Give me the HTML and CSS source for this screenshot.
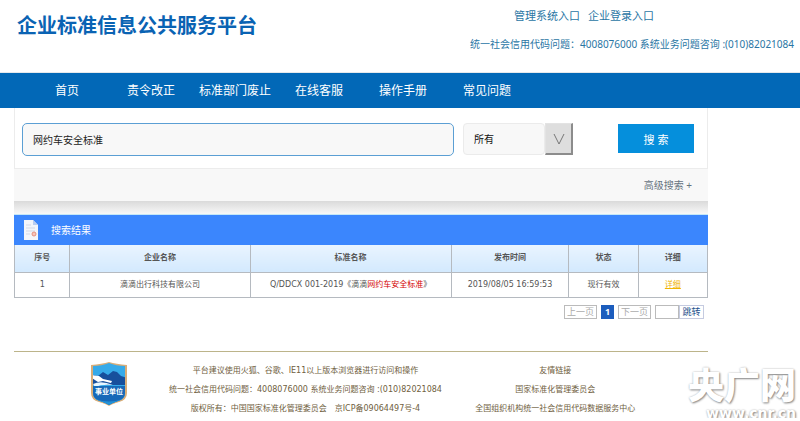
FILE: index.html
```html
<!DOCTYPE html>
<html lang="zh-CN">
<head>
    <meta charset="UTF-8">
    <meta name="viewport" content="width=device-width, initial-scale=1.0">
    <title>企业标准信息公共服务平台</title>
    <link rel="stylesheet" href="styles.css">
</head>
<body>

    <!-- Header -->
    <header class="header">
        <h1>企业标准信息公共服务平台</h1>
        <div class="header-info">
            <div class="entries">
                <a href="#">管理系统入口</a>
                <a href="#">企业登录入口</a>
            </div>
            <p>统一社会信用代码问题：4008076000 系统业务问题咨询 :(010)82021084</p>
        </div>
    </header>

    <nav class="nav">
        <a href="#">首页</a>
        <a href="#">责令改正</a>
        <a href="#">标准部门废止</a>
        <a href="#">在线客服</a>
        <a href="#">操作手册</a>
        <a href="#">常见问题</a>
    </nav>

    <div class="container">
        <!-- Search -->
        <form class="search">
            <input class="keyword" type="text" aria-label="关键词" value="网约车安全标准">
            <div class="status">
                <select id="status" aria-label="状态">
                    <option>所有</option>
                </select>
                <label class="arrow" for="status">
                    <svg width="12" height="12" viewBox="0 0 12 12"><path d="M1 1l5 10 5-10" fill="none" stroke="#777"/></svg>
                </label>
            </div>
            <button class="search-btn" type="button">搜 索</button>
        </form>
        <div class="advanced"><a href="#">高级搜索 +</a></div>
        <div class="shadow"></div>

        <!-- Results -->
        <div class="result-title">
            <svg width="16" height="20" viewBox="0 0 16 20">
                <path d="M1 0h9l5 5v15H1z" fill="#f3f5fa"/>
                <path d="M10 0v5h5z" fill="#b9cdf0"/>
                <path d="M3 5h5M3 8h9M3 11h9M3 14h4" stroke="#d3d9e6"/>
                <circle cx="11" cy="14" r="2" fill="#f6c5bd" stroke="#e5907f"/>
            </svg>
            <h2>搜索结果</h2>
        </div>
        <table class="result">
            <colgroup>
                <col class="col-no"><col class="col-company"><col class="col-name">
                <col class="col-time"><col class="col-status"><col class="col-detail">
            </colgroup>
            <thead>
                <tr>
                    <th>序号</th>
                    <th>企业名称</th>
                    <th>标准名称</th>
                    <th>发布时间</th>
                    <th>状态</th>
                    <th>详细</th>
                </tr>
            </thead>
            <tbody>
                <tr>
                    <td>1</td>
                    <td>滴滴出行科技有限公司</td>
                    <td>Q/DDCX 001-2019《滴滴<em>网约车安全标准</em>》</td>
                    <td>2019/08/05 16:59:53</td>
                    <td>现行有效</td>
                    <td><a href="#">详细</a></td>
                </tr>
            </tbody>
        </table>

        <div class="pager">
            <button type="button" disabled>上一页</button>
            <button class="current" type="button">1</button>
            <button type="button" disabled>下一页</button>
            <div class="jump">
                <input type="text" aria-label="页码">
                <button type="button">跳转</button>
            </div>
        </div>

        <!-- Footer -->
        <footer class="footer">
            <div class="badge">
                <svg width="38" height="46" viewBox="0 0 38 46">
                    <defs>
                        <clipPath id="shield"><path d="M3 5Q12 5 19 2Q26 5 35 5V32Q35 38 28 40Q22 42 19 44Q16 42 10 40Q3 38 3 32z"/></clipPath>
                    </defs>
                    <path d="M1 4Q12 3 19 1Q26 3 37 4V32Q37 39 29 41Q22 43 19 45Q16 43 9 41Q1 39 1 32z" fill="#d9ad78"/>
                    <g clip-path="url(#shield)">
                        <path d="M0 0h38v46H0z" fill="#36aae9"/>
                        <path d="M0 17l4-3 4 1 5-4 5 3 5-4 4 1 4 4 7 2v7H0z" fill="#174f9c"/>
                        <path d="M2 14l7 1 4 3 9 2-1 2-8-2-5 1-6-4z" fill="#fff"/>
                        <path d="M3 23q8-4 20 1-11-1-18 2z" fill="#e8f6ff"/>
                        <path d="M0 25h38v21H0z" fill="#1769b8"/>
                        <path d="M0 36q19 9 38 0v10H0z" fill="#2392d8"/>
                    </g>
                    <text class="badge-text" x="19" y="33" text-anchor="middle">事业单位</text>
                </svg>
            </div>
            <div class="footer-text">
                <p>平台建议使用火狐、谷歌、IE11以上版本浏览器进行访问和操作</p>
                <p>统一社会信用代码问题：4008076000 系统业务问题咨询 :(010)82021084</p>
                <p>版权所有：中国国家标准化管理委员会　京ICP备09064497号-4</p>
            </div>
            <div class="footer-text">
                <p>友情链接</p>
                <p><a href="#">国家标准化管理委员会</a></p>
                <p><a href="#">全国组织机构统一社会信用代码数据服务中心</a></p>
            </div>
        </footer>
    </div>

    <!-- Watermark -->
    <div class="watermark">
        <strong>央广网</strong>
        <span>www.cnr.cn</span>
    </div>

</body>
</html>
```

FILE: styles.css
```css
* {
    margin: 0;
    padding: 0;
    box-sizing: border-box;
}

body {
    position: relative;
    font-family: 'Noto Sans', 'Noto Sans CJK SC', sans-serif;
    font-size: 10px;
    background-color: #fff;
    color: #333;
}

a {
    color: inherit;
    text-decoration: none;
}

input, select, button {
    font-family: inherit;
    font-size: 10px;
}

/* Header */
.header {
    display: flex;
    justify-content: space-between;
    height: 73px;
    padding: 8px 6px 0 17px;
    border-bottom: 1px solid #e6e9ec;
}

.header h1 {
    font-size: 20px;
    line-height: 36px;
    color: #0a63b3;
}

.header-info {
    color: #2a76a4;
}

.entries {
    display: flex;
    gap: 8px;
    padding-left: 44px;
    font-size: 11px;
    line-height: 16px;
}

.header-info p {
    margin-top: 12px;
    line-height: 16px;
}

.nav {
    display: flex;
    height: 35px;
    padding-left: 25px;
    background-color: #0268b7;
}

.nav a {
    width: 84px;
    font-size: 12px;
    line-height: 35px;
    text-align: center;
    white-space: nowrap;
    color: #fff;
}

.container {
    margin: 0 92px 0 14px;
}

/* Search */
.search {
    display: flex;
    align-items: flex-start;
    height: 61px;
    padding: 15px 13px 0 7px;
    border: 1px solid #ececec;
    border-top: none;
}

.keyword {
    flex: 1;
    height: 33px;
    padding: 0 10px;
    border: 1px solid #5b9fd4;
    border-radius: 5px;
    background-color: #f8f8f8;
    color: #222;
}

.status {
    display: flex;
    margin: 0 45px 0 9px;
}

.status select {
    width: 82px;
    height: 32px;
    padding: 0 10px;
    border: 1px solid #ebebeb;
    border-radius: 4px;
    background-color: #f8f8f8;
    color: #111;
    appearance: none;
}

.arrow {
    display: flex;
    justify-content: center;
    align-items: center;
    width: 28px;
    height: 32px;
    border: 1px solid #e3e3e3;
    border-right: 2px solid #8c8c8c;
    border-bottom: 2px solid #8c8c8c;
    background-color: #dedede;
}

.search-btn {
    width: 76px;
    height: 29px;
    margin-top: 1px;
    border: none;
    background-color: #058fdc;
    font-size: 11px;
    color: #fff;
}

.advanced {
    height: 32px;
    padding-right: 16px;
    background-color: #f8f8f8;
    line-height: 32px;
    text-align: right;
    color: #66747f;
}

.shadow {
    height: 14px;
    border-bottom: 1px solid #c5e8f7;
    background: linear-gradient(#dadada, #f8f8f8);
}

/* Results */
.result-title {
    display: flex;
    align-items: center;
    gap: 12px;
    height: 30px;
    padding-left: 9px;
    background-color: #3b86fd;
}

.result-title h2 {
    font-size: 10px;
    font-weight: normal;
    line-height: 16px;
    color: #fff;
}

.result {
    width: 100%;
    border-collapse: collapse;
    table-layout: fixed;
    font-family: 'DejaVu Sans', 'Noto Sans CJK SC', sans-serif;
    font-size: 8px;
    line-height: 12px;
    text-align: center;
    color: #555;
}

.result th, .result td {
    height: 25px;
    border: 1px solid #b5bac0;
}

.result th {
    height: 27px;
    border-top: none;
    background: linear-gradient(#e9f4ff, #d3e9fe);
}

.result em {
    font-style: normal;
    color: #d40000;
}

.result td a {
    text-decoration: underline;
    color: #f0b400;
}

.col-no {
    width: 8%;
}

.col-company {
    width: 26%;
}

.col-name {
    width: 29%;
}

.col-time {
    width: 17%;
}

.col-status, .col-detail {
    width: 10%;
}

.pager {
    display: flex;
    justify-content: flex-end;
    gap: 4px;
    padding: 7px 4px 0 0;
}

.pager button {
    width: 33px;
    height: 14px;
    border: 1px solid #bbb;
    background-color: #fff;
    font-size: 9px;
    line-height: 12px;
    color: #aaa;
}

.pager .current {
    width: 13px;
    border-color: #1c5dbd;
    background-color: #1c5dbd;
    font-weight: bold;
    color: #fff;
}

.jump {
    display: flex;
}

.jump input {
    width: 24px;
    height: 14px;
    border: 1px solid #bbb;
}

.pager .jump button {
    width: 25px;
    border-color: #c5cbe0;
    color: #1d4f8c;
}

/* Footer */
.footer {
    display: grid;
    grid-template-columns: 21fr 42fr 30fr 7fr;
    margin-top: 32px;
    padding-top: 9px;
    border-top: 1px solid #bcb48a;
}

.badge {
    display: flex;
    justify-content: flex-end;
    padding-right: 32px;
}

.badge-text {
    font-size: 7px;
    font-weight: bold;
    fill: #fff;
}

.footer-text {
    font-family: 'DejaVu Sans', 'Noto Sans CJK SC', sans-serif;
    font-size: 8px;
    line-height: 19px;
    text-align: center;
    white-space: nowrap;
    color: #6f6040;
}

/* Watermark */
.watermark {
    position: absolute;
    right: 4px;
    top: 367px;
    display: flex;
    flex-direction: column;
    align-items: flex-end;
    color: #fff;
    text-shadow: 1px 1px 2px #888, 0 0 2px #bbb;
}

.watermark strong {
    font-size: 36px;
    font-weight: 900;
    line-height: 38px;
}

.watermark span {
    font-family: 'DejaVu Sans', sans-serif;
    font-size: 14px;
    font-weight: bold;
    line-height: 16px;
}
```
